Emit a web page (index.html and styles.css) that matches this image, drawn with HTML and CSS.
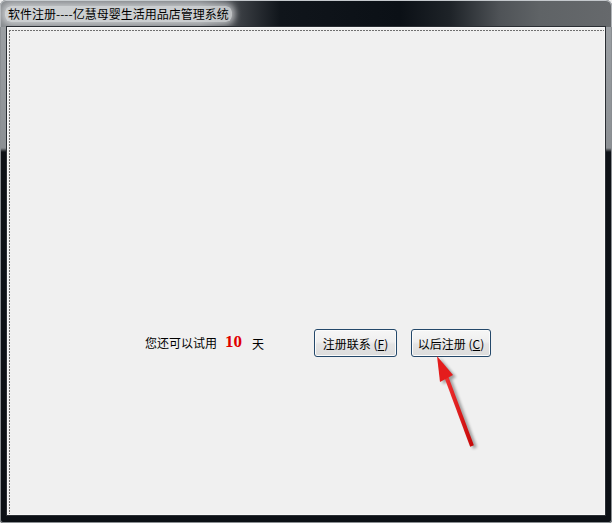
FILE: index.html
```html
<!DOCTYPE html>
<html lang="zh-CN">
<head>
<meta charset="utf-8">
<title>软件注册</title>
<link rel="stylesheet" href="styles.css">
</head>
<body>
<div class="window">
  <div class="titlebar"><span class="title">软件注册----亿慧母婴生活用品店管理系统</span></div>
  <div class="client">
    <div class="focus">
      <div class="row">
        <span class="label">您还可以试用</span>
        <span class="days">10</span>
        <span class="unit">天</span>
        <button class="btn btn-contact">注册联系 (<u>F</u>)</button>
        <button class="btn btn-later">以后注册 (<u>C</u>)</button>
      </div>
    </div>
  </div>
  <svg class="arrow" width="612" height="523" viewBox="0 0 612 523">
    <defs>
      <filter id="blur" x="-50%" y="-50%" width="200%" height="200%">
        <feGaussianBlur stdDeviation="1.5"/>
      </filter>
      <linearGradient id="red" x1="0" y1="0" x2="1" y2="0">
        <stop offset="0" stop-color="#f03030"/>
        <stop offset="1" stop-color="#c80a0a"/>
      </linearGradient>
    </defs>
    <g filter="url(#blur)" opacity="0.35" transform="translate(3,2)">
      <line x1="446" y1="376" x2="472" y2="446" stroke="#000" stroke-width="4"/>
      <polygon points="437,356 440,382 453,375" fill="#000"/>
    </g>
    <line x1="446" y1="376" x2="472" y2="446" stroke="url(#red)" stroke-width="4"/>
    <polygon points="437,356 440,382 453,375" fill="#e41c1c"/>
  </svg>
</div>
</body>
</html>
```

FILE: styles.css
```css
html, body {
  margin: 0;
  padding: 0;
  background: #f0f0f0;
}

body {
  width: 612px;
  height: 523px;
  overflow: hidden;
  font-family: "Noto Sans CJK SC", "Noto Sans", sans-serif;
  font-size: 12px;
}

.window {
  position: relative;
  width: 612px;
  height: 523px;
  box-sizing: border-box;
  padding: 0 7px 8px 7px;
  display: flex;
  flex-direction: column;
  border-radius: 6px 6px 3px 3px;
  background:
    linear-gradient(180deg, #9ea2a6 0, #8c9094 148px, #0e1217 152px, #0c1015 100%);
  box-shadow: inset 0 0 0 1px #8a8e92;
  overflow: hidden;
}

.titlebar {
  height: 27px;
  margin: 0 -7px;
  padding: 1px 0 0 8px;
  box-sizing: border-box;
  display: flex;
  align-items: center;
  border-radius: 6px 6px 0 0;
  background:
    linear-gradient(90deg, #868a8e 0, #7a7e82 200px, #3a3e43 240px, #10151b 280px, #0b1016 400px, #1e2328 450px, #4f5357 500px, #5f6366 540px, #66696c 100%);
  box-shadow: inset 0 1px 0 #c4c8cc, inset 1px 0 0 #b0b4b8, inset -1px 0 0 #b0b4b8;
}

.title {
  color: #000;
  font-size: 12px;
  line-height: 16px;
  padding: 0 3px;
  margin-left: -3px;
  background: rgba(230, 232, 234, 0.75);
  border-radius: 6px;
  box-shadow: 0 0 6px 3px rgba(230, 232, 234, 0.65);
}

.client {
  flex: 1;
  background: #f0f0f0;
  border: 1px solid #f7f7f7;
  box-shadow: 0 0 0 1px #2a2e33;
  display: flex;
  flex-direction: column;
}

.focus {
  flex: 1;
  margin: 2px 0 0 1px;
  background:
    repeating-linear-gradient(90deg, #6f6f6f 0 2px, transparent 2px 3px) top left / 100% 1px no-repeat,
    repeating-linear-gradient(180deg, #6f6f6f 0 2px, transparent 2px 3px) top left / 1px 100% no-repeat;
}

.row {
  display: flex;
  align-items: center;
  padding: 299px 0 0 136px;
  height: 28px;
}

.label {
  font-size: 12px;
  color: #000;
  line-height: 14px;
}

.days {
  margin-left: 8px;
  font-family: "Liberation Serif", "DejaVu Serif", serif;
  font-weight: bold;
  font-size: 17px;
  color: #e00000;
  line-height: 18px;
  margin-top: -2px;
}

.unit {
  margin-left: 10px;
  font-size: 12px;
  color: #000;
}

.btn {
  height: 28px;
  box-sizing: border-box;
  padding: 0;
  font-family: "Noto Sans CJK SC", "Noto Sans", sans-serif;
  font-size: 12px;
  color: #000;
  border: 1px solid #24486a;
  border-radius: 3px;
  background: linear-gradient(180deg, #f6f6f6 0%, #efefef 45%, #e4e4e4 55%, #dcdcdc 100%);
  box-shadow: inset 0 0 0 1px #fbfbfb;
}

.btn u {
  text-decoration: underline;
}

.btn-contact {
  width: 83px;
  margin-left: 50px;
}

.btn-later {
  width: 80px;
  margin-left: 14px;
}

.arrow {
  position: absolute;
  left: 0;
  top: 0;
  pointer-events: none;
}
```
